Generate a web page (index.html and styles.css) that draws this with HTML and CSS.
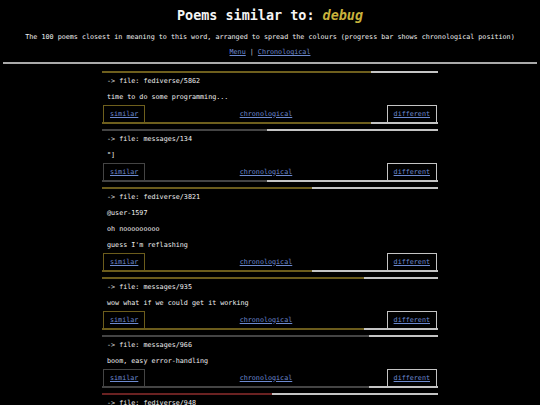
FILE: index.html
```html
<!DOCTYPE html>
<html lang="en">
<head>
    <meta charset="UTF-8">
    <meta name="viewport" content="width=device-width, initial-scale=1.0">
    <title>Poems similar to: debug</title>
    <link rel="stylesheet" href="styles.css">
</head>
<body>
    <h1>Poems similar to: <em>debug</em></h1>
    <p class="intro">The 100 poems closest in meaning to this word, arranged to spread the colours (progress bar shows chronological position)</p>
    <p class="nav"><a href="#">Menu</a> | <a href="#">Chronological</a></p>
    <hr>

    <div class="poems">
        <div class="poem" style="--c: #6e5f1d; --p: 80%;">
            <div class="bar"></div>
            <p class="file">-&gt; file: fediverse/5862</p>
            <p>time to do some programming...</p>
            <div class="links">
                <a class="btn similar" href="#">similar</a>
                <a class="chrono" href="#">chronological</a>
                <a class="btn different" href="#">different</a>
            </div>
            <div class="bar"></div>
        </div>

        <div class="poem" style="--c: #444444; --p: 49%;">
            <div class="bar"></div>
            <p class="file">-&gt; file: messages/134</p>
            <p>"]</p>
            <div class="links">
                <a class="btn similar" href="#">similar</a>
                <a class="chrono" href="#">chronological</a>
                <a class="btn different" href="#">different</a>
            </div>
            <div class="bar"></div>
        </div>

        <div class="poem" style="--c: #6b5c1c; --p: 62.5%;">
            <div class="bar"></div>
            <p class="file">-&gt; file: fediverse/3821</p>
            <p>@user-1597</p>
            <p>oh nooooooooo</p>
            <p>guess I'm reflashing</p>
            <div class="links">
                <a class="btn similar" href="#">similar</a>
                <a class="chrono" href="#">chronological</a>
                <a class="btn different" href="#">different</a>
            </div>
            <div class="bar"></div>
        </div>

        <div class="poem" style="--c: #6b5c1c; --p: 78%;">
            <div class="bar"></div>
            <p class="file">-&gt; file: messages/935</p>
            <p>wow what if we could get it working</p>
            <div class="links">
                <a class="btn similar" href="#">similar</a>
                <a class="chrono" href="#">chronological</a>
                <a class="btn different" href="#">different</a>
            </div>
            <div class="bar"></div>
        </div>

        <div class="poem" style="--c: #444444; --p: 79.5%;">
            <div class="bar"></div>
            <p class="file">-&gt; file: messages/966</p>
            <p>boom, easy error-handling</p>
            <div class="links">
                <a class="btn similar" href="#">similar</a>
                <a class="chrono" href="#">chronological</a>
                <a class="btn different" href="#">different</a>
            </div>
            <div class="bar"></div>
        </div>

        <div class="poem" style="--c: #6a2222; --p: 50.5%;">
            <div class="bar"></div>
            <p class="file">-&gt; file: fediverse/948</p>
            <p>it works on my machine</p>
            <div class="links">
                <a class="btn similar" href="#">similar</a>
                <a class="chrono" href="#">chronological</a>
                <a class="btn different" href="#">different</a>
            </div>
            <div class="bar"></div>
        </div>
    </div>
</body>
</html>
```

FILE: styles.css
```css
body {
    background-color: #000;
    color: #f0f0f0;
    font-family: "DejaVu Sans Mono", monospace;
    font-size: 6.72px;
    line-height: 8px;
    margin: 0 3px;
    padding-top: 8px;
}

h1 {
    font-size: 13.44px;
    line-height: 16px;
    text-align: center;
    margin: 0;
    color: #f4f4f4;
}

h1 em {
    color: #c9b23c;
}

.intro, .nav {
    text-align: center;
    margin: 9px 0 0;
}

.nav {
    margin-top: 7px;
    color: #ccc;
}

a {
    color: #6d8ad0;
}

hr {
    border: none;
    height: 2px;
    background-color: #aaa;
    margin: 6px 0 0;
}

.poems {
    max-width: 336px;
    margin: 7px auto 0;
}

.poem {
    margin-bottom: 5px;
}

.bar {
    height: 2px;
    background: linear-gradient(to right, var(--c) var(--p), #c4c4c4 var(--p));
}

.poem p {
    margin: 8px 0 0;
    padding: 0 5px;
}

.poem p.file {
    margin-top: 4px;
}

.links {
    display: flex;
    align-items: stretch;
    height: 17px;
    margin: 4px 1px 0;
}

.btn {
    display: flex;
    align-items: center;
    padding: 0 6px;
    border: 1px solid #c4c4c4;
    border-bottom: none;
}

.similar {
    border-color: var(--c);
}

.chrono {
    flex: 1;
    display: flex;
    align-items: center;
    justify-content: center;
}
```
